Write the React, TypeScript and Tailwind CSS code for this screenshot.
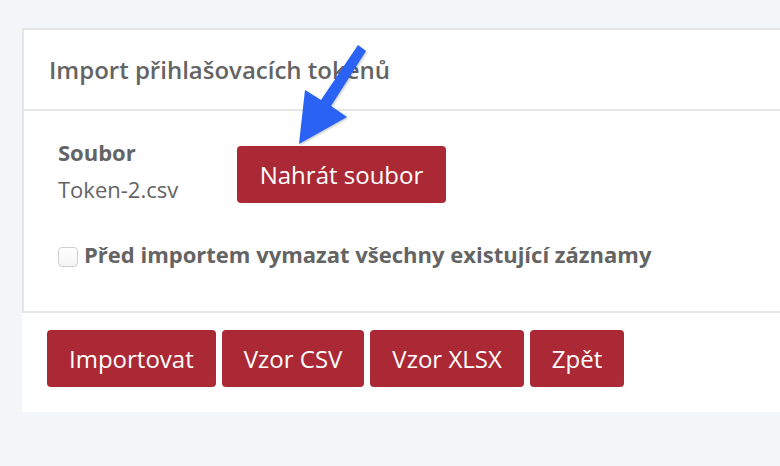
export default function App() {
  const btn =
    "h-[57px] rounded-[4px] bg-[#ab2935] px-[22px] text-[24px] text-white leading-none";
  return (
    <div className="relative h-[466px] w-[780px] overflow-hidden bg-[#f4f5f9] pt-[28px] pl-[22px] font-['Open_Sans',sans-serif] text-[#646464]">
      <div className="w-[800px] bg-white">
        <div className="border-2 border-[#e6e6e8]">
          <div className="flex h-[81px] items-center border-b-2 border-[#e6e6e8] pl-[25px] text-[24px] font-semibold">
            Import přihlašovacích tokenů
          </div>
          <div className="h-[200px] pl-[34px] pt-[23px]">
            <div className="flex items-start">
              <div className="w-[179px] text-[22px] leading-[37px]">
                <div className="font-bold">Soubor</div>
                <div>Token-2.csv</div>
              </div>
              <button className="mt-[12px] h-[57px] w-[209px] rounded-[4px] bg-[#ab2935] text-[24px] text-white">
                Nahrát soubor
              </button>
            </div>
            <label className="mt-[32px] flex items-start gap-[6px] text-[22px] font-bold leading-[28px]">
              <span className="mt-[7px] h-[20px] w-[20px] rounded-[4px] border border-[#cfcfcf] bg-gradient-to-b from-white to-[#f3f3f3]" />
              Před importem vymazat všechny existující záznamy
            </label>
          </div>
        </div>
        <div className="flex gap-[6px] pl-[25px] pt-[17px] pb-[25px]">
          <button className={btn}>Importovat</button>
          <button className={btn}>Vzor CSV</button>
          <button className={btn}>Vzor XLSX</button>
          <button className={btn}>Zpět</button>
        </div>
      </div>
      <svg
        className="pointer-events-none absolute left-0 top-0"
        width="780"
        height="466"
        viewBox="0 0 780 466"
      >
        <defs>
          <filter id="sh" x="-20%" y="-20%" width="140%" height="140%">
            <feDropShadow dx="1" dy="1" stdDeviation="1.2" floodColor="#000" floodOpacity="0.25" />
          </filter>
        </defs>
        <polygon
          filter="url(#sh)"
          fill="#2962f4"
          points="358,45 366,51 331,106 347,117 299,144 305,90 321,100"
        />
      </svg>
    </div>
  );
}
